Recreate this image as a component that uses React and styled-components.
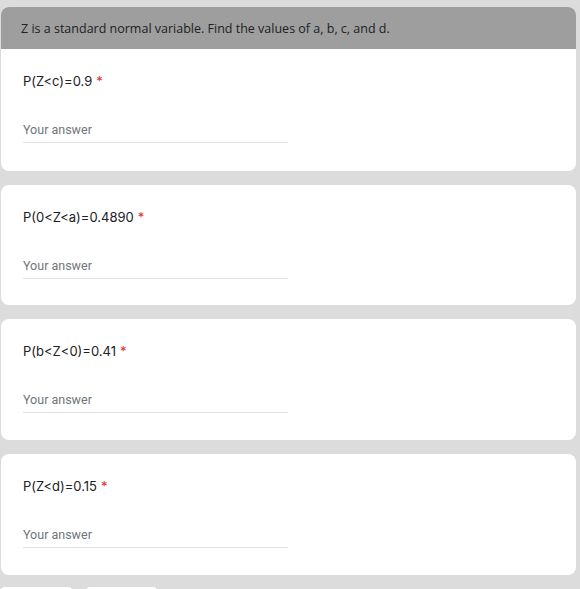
import React from "react";
import styled, { createGlobalStyle } from "styled-components";

const GlobalStyle = createGlobalStyle`
  html, body {
    margin: 0;
    padding: 0;
    background: #dcdcdc;
  }
`;

const Page = styled.div`
  width: 575px;
  margin-left: 1px;
  padding-top: 7px;
  display: flex;
  flex-direction: column;
  gap: 14px;
`;

const Card = styled.div`
  background: #fff;
  border-radius: 8px;
  overflow: hidden;
  height: ${(p) => p.$h}px;
  display: flex;
  flex-direction: column;
`;

const Header = styled.div`
  background: #9e9e9e;
  height: 42px;
  padding-left: 20px;
  display: flex;
  align-items: center;
  font-family: "Open Sans", sans-serif;
  font-size: 12.5px;
  color: #202124;
`;

const Body = styled.div`
  padding: 24px 22px 0;
`;

const Question = styled.div`
  font-family: Inter, sans-serif;
  font-size: 13px;
  color: #202124;
  line-height: 16px;
`;

const Star = styled.span`
  color: #d93025;
  margin-left: 4px;
`;

const Answer = styled.div`
  margin-top: 33px;
  width: 265px;
  border-bottom: 1px solid #e0e0e0;
  padding-bottom: 4px;
  font-family: Roboto, sans-serif;
  font-size: 12.5px;
  color: #70757a;
  line-height: 16px;
`;

const Buttons = styled.div`
  display: flex;
  gap: 14px;
  margin-top: -2px;
`;

const Btn = styled.div`
  width: 71px;
  height: 20px;
  background: #fff;
  border-radius: 4px;
`;

const questions = [
  { q: "P(Z<c)=0.9", h: 164 },
  { q: "P(0<Z<a)=0.4890", h: 120 },
  { q: "P(b<Z<0)=0.41", h: 121 },
  { q: "P(Z<d)=0.15", h: 121 },
];

export default function App() {
  return (
    <>
      <GlobalStyle />
      <Page>
        {questions.map(({ q, h }, i) => (
          <Card key={q} $h={h}>
            {i === 0 && (
              <Header>
                Z is a standard normal variable. Find the values of a, b, c, and d.
              </Header>
            )}
            <Body>
              <Question>
                {q}
                <Star>*</Star>
              </Question>
              <Answer>Your answer</Answer>
            </Body>
          </Card>
        ))}
        <Buttons>
          <Btn />
          <Btn />
        </Buttons>
      </Page>
    </>
  );
}
